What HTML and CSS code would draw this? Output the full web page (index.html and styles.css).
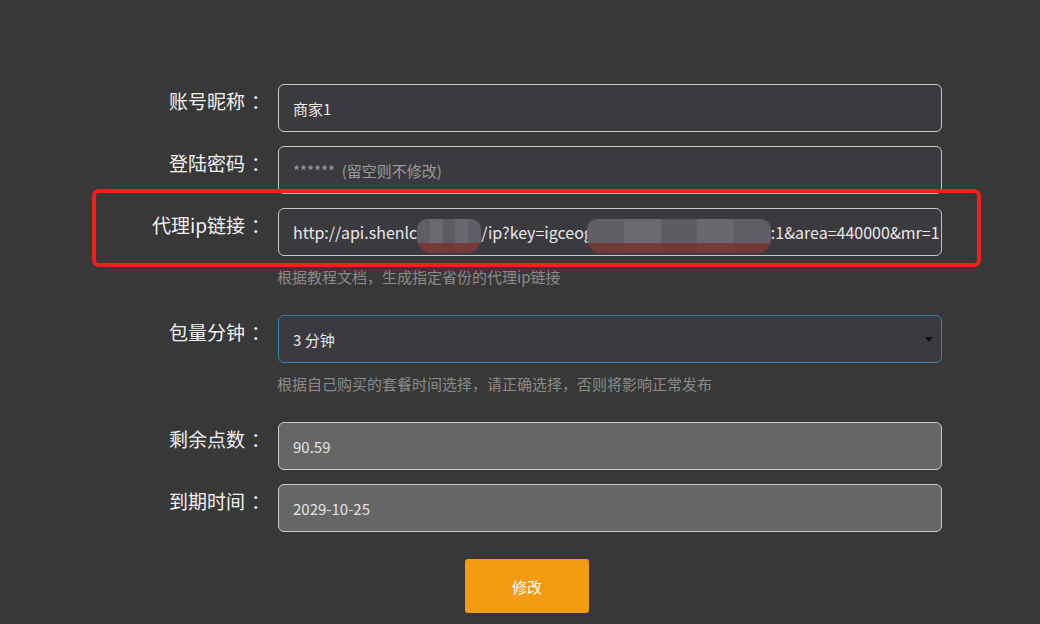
FILE: index.html
```html
<!DOCTYPE html>
<html lang="zh-CN">

<head>
    <meta charset="utf-8">
    <meta name="viewport" content="width=device-width, initial-scale=1.0">
    <title>账号设置</title>
    <link rel="stylesheet" href="styles.css">
</head>

<body>
    <form class="form">
        <div class="row">
            <label>账号昵称<span class="colon">：</span></label>
            <input class="field" type="text" value="商家1">
        </div>
        <div class="row">
            <label>登陆密码<span class="colon">：</span></label>
            <input class="field" type="password" placeholder="******  (留空则不修改)">
        </div>
        <div class="row marked">
            <label>代理ip链接<span class="colon">：</span></label>
            <div class="field url">http://api.shenlc<span class="blur b1"></span>/ip?key=igceog<span class="blur b2"></span>:1&amp;area=440000&amp;mr=1</div>
            <span class="mark"></span>
        </div>
        <p class="help">根据教程文档，生成指定省份的代理ip链接</p>
        <div class="row">
            <label>包量分钟<span class="colon">：</span></label>
            <div class="select-wrap">
                <select class="field select">
                    <option>3 分钟</option>
                    <option>5 分钟</option>
                    <option>10 分钟</option>
                </select>
            </div>
        </div>
        <p class="help">根据自己购买的套餐时间选择，请正确选择，否则将影响正常发布</p>
        <div class="row">
            <label>剩余点数<span class="colon">：</span></label>
            <input class="field" type="text" value="90.59" disabled>
        </div>
        <div class="row">
            <label>到期时间<span class="colon">：</span></label>
            <input class="field" type="text" value="2029-10-25" disabled>
        </div>
        <div class="actions">
            <button type="button" class="btn">修改</button>
        </div>
    </form>
</body>

</html>
```

FILE: styles.css
```css
* {
    box-sizing: border-box;
}

body {
    margin: 0;
    background-color: #383838;
    font-family: "Noto Sans CJK SC", "Noto Sans", sans-serif;
    color: #eee;
}

.form {
    padding: 84px 0 0 8px;
    width: 942px;
}

.row {
    display: grid;
    grid-template-columns: 254px 664px;
    column-gap: 16px;
    align-items: start;
    margin-bottom: 14px;
    position: relative;
}

.row label {
    text-align: right;
    font-size: 19px;
    line-height: 26px;
    padding-top: 4px;
    color: #f2f2f2;
}

.colon {
    margin-left: 6px;
    margin-right: -8px;
}

.field {
    width: 100%;
    height: 48px;
    padding: 0 14px;
    background-color: #3b3a3f;
    border: 1px solid #c8c8c8;
    border-radius: 6px;
    font-family: "Noto Sans CJK SC", "Noto Sans", sans-serif;
    font-size: 15px;
    color: #e8e8e8;
    outline: none;
}

.field::placeholder {
    color: #9a9a9a;
}

.field:disabled {
    background-color: #666;
    color: #e4e4e4;
}

.url {
    display: flex;
    align-items: center;
    white-space: nowrap;
    overflow: hidden;
    font-size: 16px;
    padding-right: 0;
}

.blur {
    display: inline-block;
    height: 34px;
    margin-top: 8px;
    border-radius: 10px 10px 14px 14px;
    flex-shrink: 0;
    background:
        linear-gradient(to bottom, transparent 72%, rgba(120, 50, 50, .85) 72%),
        linear-gradient(to right, #605f65 0 20%, #6b6a70 20% 40%, #5d5c62 40% 60%, #69686e 60% 80%, #5f5e64 80%);
}

.b1 {
    width: 64px;
}

.b2 {
    width: 184px;
    margin-left: -6px;
}

.marked {
    margin-top: 1px;
}

.mark {
    position: absolute;
    left: 84px;
    top: -19px;
    width: 889px;
    height: 78px;
    border: 4px solid #f2201a;
    border-radius: 7px;
    pointer-events: none;
}

.help {
    margin: -3px 0 28px 269px;
    font-size: 15px;
    line-height: 20px;
    color: #8b8b8b;
}

.select-wrap {
    position: relative;
}

.select {
    appearance: none;
    -webkit-appearance: none;
    border-color: #3f80a6;
}

.select-wrap::after {
    content: "";
    position: absolute;
    right: 9px;
    top: 22px;
    border-left: 4px solid transparent;
    border-right: 4px solid transparent;
    border-top: 5px solid #111;
}

.actions {
    padding: 13px 0 0 457px;
}

.btn {
    width: 124px;
    height: 54px;
    background-color: #f39c12;
    border: none;
    border-radius: 3px;
    color: #fff;
    font-family: "Noto Sans CJK SC", "Noto Sans", sans-serif;
    font-size: 15px;
    cursor: pointer;
}
```
